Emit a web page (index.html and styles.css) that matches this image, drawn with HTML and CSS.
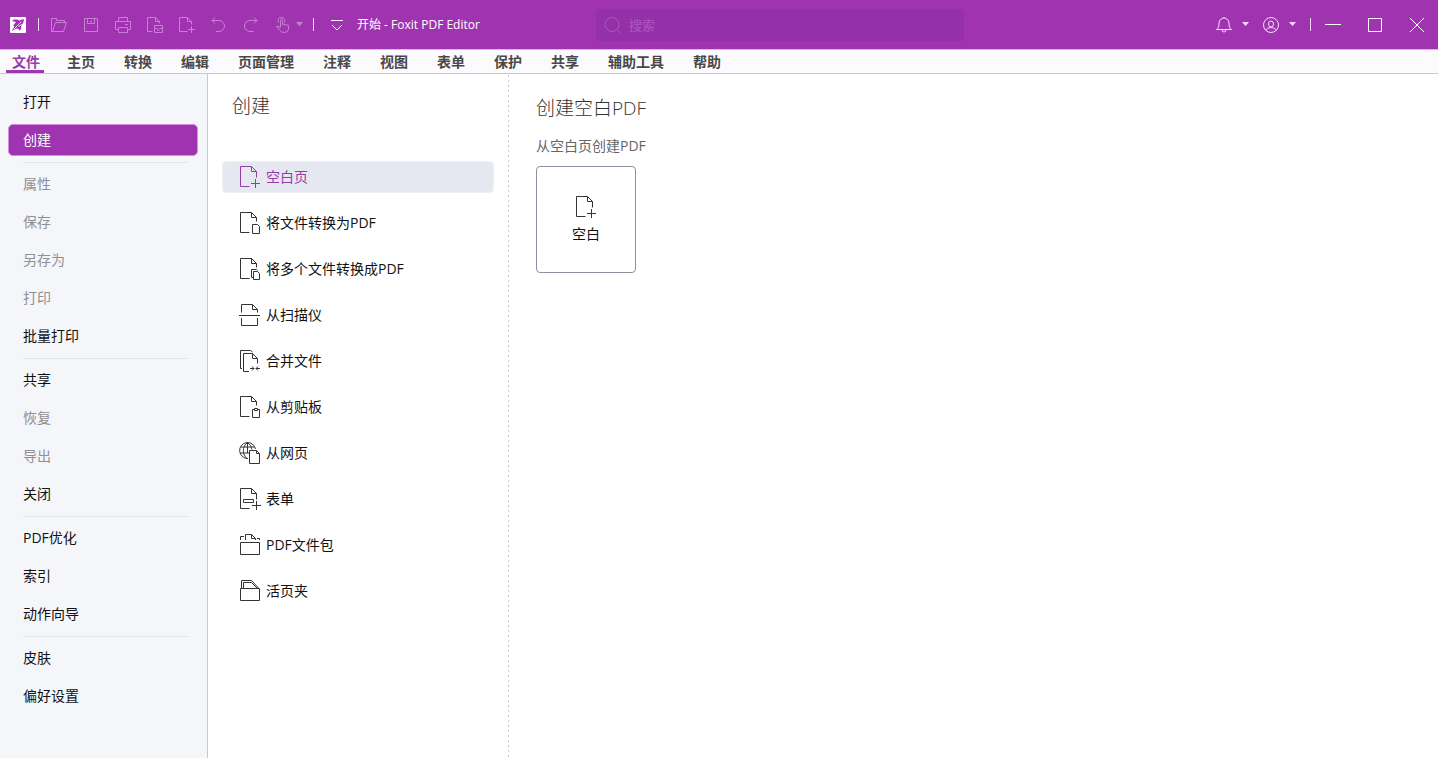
FILE: index.html
```html
<!DOCTYPE html>
<html lang="zh-CN">
<head>
<meta charset="utf-8">
<title>开始 - Foxit PDF Editor</title>
<link rel="stylesheet" href="styles.css">
</head>
<body>
<svg class="defs" aria-hidden="true">
  <symbol id="page-plus" viewBox="0 0 22 22">
    <path d="M10.5 20.5h-9V.5h11l5 5v6M12.500.5v5h5M16.500 13v9M12 17.500h9"/>
  </symbol>
  <symbol id="caret" viewBox="0 0 7 5"><path class="fill" d="M0 0h7L3.500 4z"/></symbol>
</svg>
<header class="titlebar">
  <div class="quick">
    <svg class="logo" viewBox="0 0 16 16"><rect width="16" height="16" rx="1" fill="#fff"/><path fill="#a034b0" d="M2 4 4 2.500h3.500l1.500 1L14 2l-.5 3-2 3.500-.5 3.500-1.500 1.500-1-1.500-2-.5L3 13.500H2L4 10l-.5-2L6 5z"/><path stroke="#fff" stroke-width=".8" d="M3.500 12.500 7 9l4.500-4.500M8.500 9.500l3.500-2"/></svg>
    <span class="bar"></span>
    <div class="tools">
      <button class="tool" aria-label="打开"><svg viewBox="0 0 16 16"><path d="M.5 14.500V1.500h5v2h8v2M.5 14.500h12l3-9h-11l-3 9"/></svg></button>
      <button class="tool" aria-label="保存"><svg viewBox="0 0 16 16"><path d="M1.500 1.500h13v13h-13zM4.500 1.500v5h7v-5M7 4.500h2"/></svg></button>
      <button class="tool" aria-label="打印"><svg viewBox="0 0 16 16"><path d="M3.500 4V.5h9V4M3.500 12.500h-3v-8h15v8h-3M3.500 10.500h9v5h-9zM10 7.500h3"/></svg></button>
      <button class="tool" aria-label="邮件"><svg viewBox="0 0 16 16"><path d="M5.500 14.500h-5V.5h8l4 4v2M8.500.5v4h4M7.500 8.500h8v7h-8zM7.500 11.500h3M12.500 11.500h3M10 13h2.500"/></svg></button>
      <button class="tool" aria-label="新建"><svg viewBox="0 0 16 16"><path d="M8.500 14.500h-8V.5h8l4 4v3M8.500.5v4h4M12.500 9v7M9 12.500h7"/></svg></button>
      <button class="tool" aria-label="撤销"><svg viewBox="0 0 16 16"><path d="M4 .5l-3 3 3 3M1 3.500h7a5.500 5.500 0 0 1 0 11H5"/></svg></button>
      <button class="tool" aria-label="重做"><svg viewBox="0 0 16 16"><path d="M11 .5l3 3-3 3M14 3.500H7a5.500 5.500 0 0 0 0 11h3.500"/></svg></button>
      <button class="tool hand" aria-label="手型工具"><svg viewBox="0 0 16 16"><path d="M5.500 10V3.500q0-1.500 1-1.500t1 1.500V8q0-1 1-1t1 1v.5q0-1 1-1t1 1V9q0-1 1-1t1 1v3q-.5 3.500-4 3.500T4.500 13L1.500 9.500q1-1.500 4 1.500M3.500 5.500q-1.500-5 3-5t3 5"/></svg><svg class="caret"><use href="#caret"/></svg></button>
    </div>
    <span class="bar"></span>
    <button class="expand" aria-label="自定义"><svg viewBox="0 0 16 16"><path d="M2 3.500h12M3 8l5 5 5-5"/></svg></button>
    <span class="caption">开始 - Foxit PDF Editor</span>
  </div>
  <label class="search">
    <svg viewBox="0 0 18 18"><circle cx="8" cy="8.500" r="7"/><path d="m13 13.500 3.500 3.500"/></svg>
    <input type="text" placeholder="搜索" aria-label="搜索">
  </label>
  <div class="system">
    <button class="menu" aria-label="通知"><svg viewBox="0 0 16 16"><path d="M.5 12.500c2-1.500 2.500-3 2.500-6.500a5 5 0 0 1 10 0c0 3.500.5 5 2.500 6.500zM6 13a2 2 0 0 0 4 0M8 0v1"/></svg><svg class="caret"><use href="#caret"/></svg></button>
    <button class="menu" aria-label="账户"><svg viewBox="0 0 16 16"><circle cx="8" cy="8" r="7.500"/><ellipse cx="8" cy="7" rx="2.500" ry="3"/><path d="M3 13.500q.5-3 5-3t5 3"/></svg><svg class="caret"><use href="#caret"/></svg></button>
    <span class="bar"></span>
    <div class="window">
      <button aria-label="最小化"><svg viewBox="0 0 16 16"><path d="M0 7.500h16"/></svg></button>
      <button aria-label="最大化"><svg viewBox="0 0 16 16"><path d="M1.500 1.500h13v13h-13z"/></svg></button>
      <button aria-label="关闭窗口"><svg viewBox="0 0 16 16"><path d="m1 1 14 14M15 1 1 15"/></svg></button>
    </div>
  </div>
</header>
<nav class="tabs">
  <button class="tab active">文件</button>
  <button class="tab">主页</button>
  <button class="tab">转换</button>
  <button class="tab">编辑</button>
  <button class="tab">页面管理</button>
  <button class="tab">注释</button>
  <button class="tab">视图</button>
  <button class="tab">表单</button>
  <button class="tab">保护</button>
  <button class="tab">共享</button>
  <button class="tab">辅助工具</button>
  <button class="tab">帮助</button>
</nav>
<div class="backstage">
  <nav class="sidebar">
    <div class="group">
      <button class="entry">打开</button>
      <button class="entry selected">创建</button>
    </div>
    <div class="group">
      <button class="entry" disabled>属性</button>
      <button class="entry" disabled>保存</button>
      <button class="entry" disabled>另存为</button>
      <button class="entry" disabled>打印</button>
      <button class="entry">批量打印</button>
    </div>
    <div class="group">
      <button class="entry">共享</button>
      <button class="entry" disabled>恢复</button>
      <button class="entry" disabled>导出</button>
      <button class="entry">关闭</button>
    </div>
    <div class="group">
      <button class="entry">PDF优化</button>
      <button class="entry">索引</button>
      <button class="entry">动作向导</button>
    </div>
    <div class="group">
      <button class="entry">皮肤</button>
      <button class="entry">偏好设置</button>
    </div>
  </nav>
  <section class="sources">
    <h1>创建</h1>
    <div class="list">
      <button class="source chosen"><svg><use href="#page-plus"/></svg>空白页</button>
      <button class="source"><svg viewBox="0 0 22 22"><path d="M10.500 20.500h-9V.5h11l5 5v4M12.500.5v5h5M13.500 12.500h5l2 2v7h-7z"/></svg>将文件转换为PDF</button>
      <button class="source"><svg viewBox="0 0 22 22"><path d="M10.500 20.500h-9V.5h11l5 5v4M12.500.5v5h5M14.500 19.500h-2v-8h5l1 1M14.500 13.500h4l2 2v6h-6z"/></svg>将多个文件转换成PDF</button>
      <button class="source"><svg viewBox="0 0 22 22"><path d="M2.500 8.500v-8h11l5 5v3M13.500.5v5h5M0 11.500h21M2.500 14v7.500h16V14"/></svg>从扫描仪</button>
      <button class="source"><svg viewBox="0 0 22 22"><path d="M3 18.500H1.500V.5h10l2 1.500M10 21.500H4.500v-18h9l5 5v5M13.500 3.500v5h5M11 18.500h4M13 16.500l2 2-2 2M21 18.500h-4M19 16.500l-2 2 2 2"/></svg>合并文件</button>
      <button class="source"><svg viewBox="0 0 22 22"><path d="M10.500 20.500h-9V.5h11l5 5v4M12.500.5v5h5M15.500 13.500h-2v8h7v-8h-2M15.500 14.500v-2h3v2z"/></svg>从剪贴板</button>
      <button class="source"><svg viewBox="0 0 22 22"><path d="M9 16.500A8 8 0 1 1 16.500 7M8.500.5C3 5 3 12 8 16.500M8.500.5q4 3 4.500 7M2 5h13.500M1 11h9M8.500.5V11"/><path d="M10.500 8.500h7l3 3v10h-10zM17.500 8.500v3h3"/></svg>从网页</button>
      <button class="source"><svg viewBox="0 0 22 22"><path d="M10.500 20.500h-9V.5h11l5 5v6M12.500.5v5h5M4.500 11.500h10v3h-10zM17.500 13v9M13 17.500h9"/></svg>表单</button>
      <button class="source"><svg viewBox="0 0 22 22"><path d="M1.500 8.500h19v12h-19zM1.500 6V2.500H5M6.500 6V.5h6l4 4V6M12.500.5v4h4M18 4.500h2.500V6"/></svg>PDF文件包</button>
      <button class="source"><svg viewBox="0 0 22 22"><path d="M1.500 8.500h19v12h-19zM2.500 8V.5h10L19.500 8M4.500 8V2.500h8l6 6"/></svg>活页夹</button>
    </div>
  </section>
  <main class="detail">
    <h2>创建空白PDF</h2>
    <p>从空白页创建PDF</p>
    <button class="card"><svg><use href="#page-plus"/></svg>空白</button>
  </main>
</div>
</body>
</html>
```

FILE: styles.css
```css
* { box-sizing: border-box; }

body {
  margin: 0;
  min-height: 100vh;
  display: flex;
  flex-direction: column;
  background: #fff;
  color: #111;
  font: 14px/20px "Open Sans", "Noto Sans CJK SC", sans-serif;
}

button {
  margin: 0;
  padding: 0;
  border: 0;
  background: none;
  color: inherit;
  font: inherit;
  cursor: pointer;
}

svg {
  display: block;
  flex: none;
  fill: none;
  stroke: currentColor;
}

.fill { fill: currentColor; stroke: none; }
.defs { position: absolute; width: 0; height: 0; }

.titlebar {
  display: flex;
  align-items: center;
  height: 50px;
  padding: 0 13px 0 10px;
  background: #a034b0;
  border-bottom: 1px solid #d9b5e3;
  color: #f6dcfa;
}

.titlebar button { display: flex; align-items: center; }
.titlebar button svg, .logo { width: 16px; height: 16px; }
.titlebar button .caret { width: 7px; height: 5px; }
.logo { margin-right: 2px; stroke: none; }
.bar { width: 1px; height: 13px; background: #f6dcfa; }

.quick { display: flex; align-items: center; flex: 0 0 586px; gap: 10px; }
.tools { display: flex; gap: 16px; padding-left: 2px; color: #c880d5; }
.titlebar .hand { gap: 5px; }
.expand { color: #fff; }
.titlebar .expand { padding: 0 2px 0 5px; }
.caption { color: #fff; font-size: 12px; white-space: nowrap; }

.search {
  display: flex;
  align-items: center;
  gap: 7px;
  flex: 0 1 368px;
  min-width: 0;
  height: 32px;
  padding: 0 8px;
  border-radius: 4px;
  background: #9431a9;
  color: #ae58bf;
}

.search svg { width: 18px; height: 18px; }
.search input {
  flex: 1;
  min-width: 0;
  padding: 0;
  border: 0;
  outline: 0;
  background: none;
  color: #fff;
  font: inherit;
  font-size: 13px;
}
.search input::placeholder { color: #ae58bf; opacity: 1; }

.system { display: flex; align-items: center; gap: 14px; margin-left: auto; }
.menu { gap: 10px; }
.window { display: flex; gap: 26px; color: #fff; }

.tabs {
  display: flex;
  gap: 19px;
  height: 24px;
  padding-left: 6px;
  background: #fbfbfe;
  border-bottom: 1px solid #c6c8d3;
}

.tab {
  padding: 3px 5px 0;
  border-bottom: 3px solid transparent;
  color: #484848;
  font-weight: 700;
  line-height: 17px;
  white-space: nowrap;
}

.tab.active {
  margin-right: -1px;
  padding: 3px 4px 0 6px;
  border-color: #963ba8;
  color: #963ba8;
}

.backstage { display: flex; flex: 1; }

.sidebar {
  display: flex;
  flex-direction: column;
  gap: 6px;
  flex: 0 0 208px;
  padding: 12px 9px 12px 8px;
  background: #f4f6fa;
  border-right: 1px solid #c5c8d8;
}

.group { display: flex; flex-direction: column; gap: 6px; }

.group + .group::before {
  content: "";
  height: 1px;
  margin: 0 9px -1px 15px;
  background: #e4e6ec;
}

.entry {
  height: 32px;
  padding: 0 14px;
  border: 1px solid transparent;
  border-radius: 5px;
  text-align: left;
}

.entry:disabled { color: #8f9094; }
.entry.selected { background: #a034b0; border-color: #cf8fd9; color: #fff; }

.sources {
  flex: 0 0 301px;
  padding: 18px 15px 18px 14px;
  background: repeating-linear-gradient(transparent 0 1px, #c6c8cc 1px 3px, transparent 3px 5px) right / 1px 100% no-repeat;
}

h1, h2 { margin: 0; color: #333; font-size: 19px; font-weight: 300; line-height: 28px; }
h1 { padding-left: 10px; }

.list { display: flex; flex-direction: column; gap: 14px; margin-top: 41px; }

.source {
  display: flex;
  align-items: center;
  gap: 5px;
  height: 32px;
  padding: 0 16px;
  border: 1px solid transparent;
  border-radius: 4px;
  text-align: left;
}

.source svg, .card svg { width: 22px; height: 22px; color: #333; }
.source.chosen { background: #e5e8f0; border-color: #eff1f6; color: #963ba8; }
.source.chosen svg { color: #963ba8; }

.detail { flex: 1; padding: 20px 27px; }
.detail p { margin: 14px 0 10px; color: #666; }

.card {
  display: flex;
  flex-direction: column;
  align-items: center;
  justify-content: center;
  gap: 6px;
  width: 100px;
  height: 107px;
  border: 1px solid #8f90a0;
  border-radius: 4px;
}
```
